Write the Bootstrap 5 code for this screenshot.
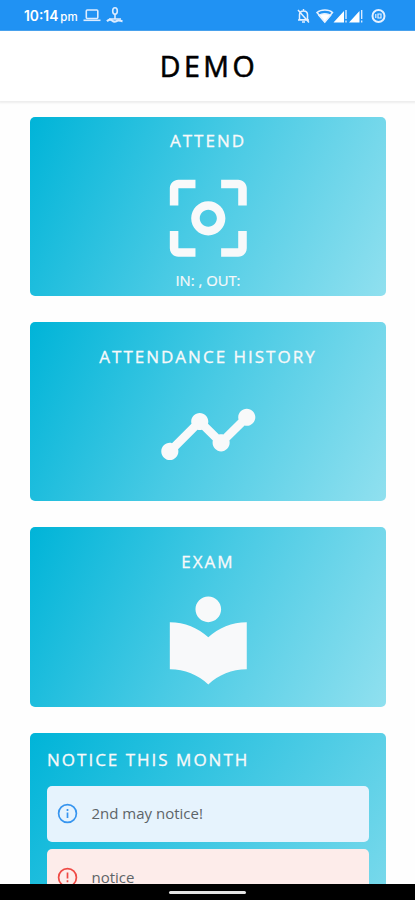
<!DOCTYPE html>
<html lang="en">
<head>
<meta charset="utf-8">
<meta name="viewport" content="width=device-width, initial-scale=1">
<title>Demo</title>
<link href="https://cdn.jsdelivr.net/npm/bootstrap@5.3.0/dist/css/bootstrap.min.css" rel="stylesheet">
<style>
body{font-family:"Open Sans","Noto Sans",sans-serif;height:900px;background:#fefefe}
.statusbar{height:31px;background:#2092f3;padding:0 29px 0 24px;border-bottom:1px solid #4aa5f2}
.clock{gap:2px;font:600 13.8px/30px "Inter",sans-serif;padding-top:2px}
.clock small{font-size:11.5px;font-weight:500}
.titlebar{height:70px;box-shadow:0 1px 2px 1px rgba(0,0,0,.07);padding-top:1px}
.titlebar h1{font-size:28.5px;font-weight:400;letter-spacing:3.6px;margin-right:-3px;color:#000;-webkit-text-stroke:.6px #000}
.content{padding:16px 29px 0 30px;gap:26px;min-height:0}
.tile{height:179.2px;border-radius:5px;background:linear-gradient(116deg,#00b4d8,#48cae4 48%,#90e0ef);color:#f8f9fa}
.tile h2,.notices h2{font-size:17px;line-height:24px;letter-spacing:2px;font-weight:400;-webkit-text-stroke:.3px #f8f9fa}
.tile svg{width:102.6px;height:102.6px;fill:#f8f9fa}
.h-attend{padding-top:12px;margin-bottom:14px}
.h-history{padding-top:23px;margin-bottom:14px}
.h-exam{padding-top:23px;margin-bottom:14px}
.inout{font-size:14.8px;line-height:20px;-webkit-text-stroke:.2px #f8f9fa}
.notices{height:290px;padding:15px 17px;border-radius:5px;background:linear-gradient(125deg,#00b4d8,#48cae4 50%,#90e0ef);color:#f8f9fa}
.notices h2{margin-bottom:14px}
.notice{height:56px;border-radius:5px;padding-left:10px;gap:13.5px;margin-bottom:7.5px;font-size:15px;color:#5d6468}
.notice svg{width:21px;height:21px}
.info{background:#e6f3fd}.danger{background:#fdecea}
.navstrip{height:16px;background:#000}
.navstrip div{width:77px;height:3px;border-radius:2px;background:#e4e4e4}
</style>
</head>
<body class="d-flex flex-column overflow-hidden m-0">
<div class="statusbar d-flex align-items-center justify-content-between text-white flex-shrink-0">
  <div class="d-flex align-items-center">
    <div class="clock d-flex align-items-baseline"><span>10:14</span><small>pm</small></div>
    <svg class="ms-1" width="42" height="20" viewBox="82 6 42 20" fill="none" stroke="#dcecff" stroke-width="1.600">
      <rect x="86.300" y="11" width="11.500" height="8.500" rx="1"/><path d="M83.500 21.300h17"/>
      <ellipse cx="115" cy="12" rx="2.300" ry="3.200"/><path d="M115 15v5M109 20h12"/><path d="M107 22.300c2-2 4-2 5.500-.5s3 1 4.500 0 3 0 5.500.5" stroke-width="2.200"/>
    </svg>
  </div>
  <svg width="90" height="20" viewBox="296 5 90 20" fill="none" stroke="#e4f0ff" stroke-width="1.500">
    <path d="M299.500 19.800v-5c0-5 8-5 8 0v5zM298 20h11M303.500 9v2M302 22h3M298 10l11 12.500"/>
    <path d="M317 12.500c4-3.500 12-3.500 15.500 0l-7.700 9z"/><path d="M319 15.300c3-2 8.500-2 11.500 0l-5.700 6.700z" fill="#fff"/>
    <path d="M333.500 22.500L344 11v11.500zM349 22.500L359.500 11v11.500z" fill="#fff" stroke="none"/>
    <path d="M346 10v9M346 20.500v2M361.700 10v9M361.700 20.500v2" stroke-width="1.300"/>
    <circle cx="378.500" cy="16" r="6" stroke-width="2"/><path d="M375.800 14v4M378 14h3v4h-3z" stroke-width="1.200"/>
  </svg>
</div>
<header class="titlebar d-flex align-items-center justify-content-center bg-white flex-shrink-0"><h1 class="mb-0">DEMO</h1></header>
<main class="content d-flex flex-column flex-grow-1 overflow-hidden">
  <section class="tile d-flex flex-column align-items-center flex-shrink-0">
    <h2 class="h-attend">ATTEND</h2>
    <svg viewBox="0 0 24 24"><path d="M5 15H3v4c0 1.100.9 2 2 2h4v-2H5v-4zM5 5h4V3H5c-1.100 0-2 .9-2 2v4h2V5zm14-2h-4v2h4v4h2V5c0-1.100-.9-2-2-2zm0 16h-4v2h4c1.100 0 2-.9 2-2v-4h-2v4zM12 8c-2.210 0-4 1.790-4 4s1.790 4 4 4 4-1.790 4-4-1.790-4-4-4zm0 6c-1.100 0-2-.9-2-2s.9-2 2-2 2 .9 2 2-.9 2-2 2z"/></svg>
    <div class="inout">IN: , OUT:</div>
  </section>
  <section class="tile d-flex flex-column align-items-center flex-shrink-0">
    <h2 class="h-history">ATTENDANCE HISTORY</h2>
    <svg viewBox="0 0 24 24"><path d="M23 8c0 1.100-.9 2-2 2-.18 0-.35-.02-.51-.07l-3.560 3.550c.05.16.07.34.07.52 0 1.100-.9 2-2 2s-2-.9-2-2c0-.18.02-.36.07-.52l-2.550-2.550c-.16.05-.34.07-.52.07s-.36-.02-.52-.07l-4.550 4.560c.05.16.07.33.07.51 0 1.100-.9 2-2 2s-2-.9-2-2 .9-2 2-2c.18 0 .35.02.51.07l4.560-4.550C8.020 9.360 8 9.180 8 9c0-1.100.9-2 2-2s2 .9 2 2c0 .18-.02.36-.07.52l2.550 2.550c.16-.05.34-.07.52-.07s.36.02.52.07l3.550-3.560C19.020 8.350 19 8.180 19 8c0-1.100.9-2 2-2s2 .9 2 2z"/></svg>
  </section>
  <section class="tile d-flex flex-column align-items-center flex-shrink-0">
    <h2 class="h-exam">EXAM</h2>
    <svg viewBox="0 0 24 24"><path d="M12 11.550C9.640 9.350 6.480 8 3 8v11c3.480 0 6.640 1.350 9 3.550 2.360-2.190 5.520-3.550 9-3.550V8c-3.480 0-6.640 1.350-9 3.550zM12 8c1.660 0 3-1.340 3-3s-1.340-3-3-3-3 1.340-3 3 1.340 3 3 3z"/></svg>
  </section>
  <section class="notices flex-shrink-0">
    <h2>NOTICE THIS MONTH</h2>
    <div class="notice info d-flex align-items-center">
      <svg viewBox="0 0 21 21" fill="none" stroke="#3795ef" stroke-width="1.700"><circle cx="10.500" cy="10.500" r="8.900"/><path d="M10.500 9.500v5.500M10.500 6v2"/></svg>
      <span>2nd may notice!</span>
    </div>
    <div class="notice danger d-flex align-items-center">
      <svg viewBox="0 0 21 21" fill="none" stroke="#ef4a45" stroke-width="1.700"><circle cx="10.500" cy="10.500" r="8.900"/><path d="M10.500 5.500v6M10.500 13.300v2"/></svg>
      <span>notice</span>
    </div>
  </section>
</main>
<footer class="navstrip d-flex align-items-center justify-content-center flex-shrink-0"><div></div></footer>
<script src="https://cdn.jsdelivr.net/npm/bootstrap@5.3.0/dist/js/bootstrap.bundle.min.js"></script>
</body>
</html>
